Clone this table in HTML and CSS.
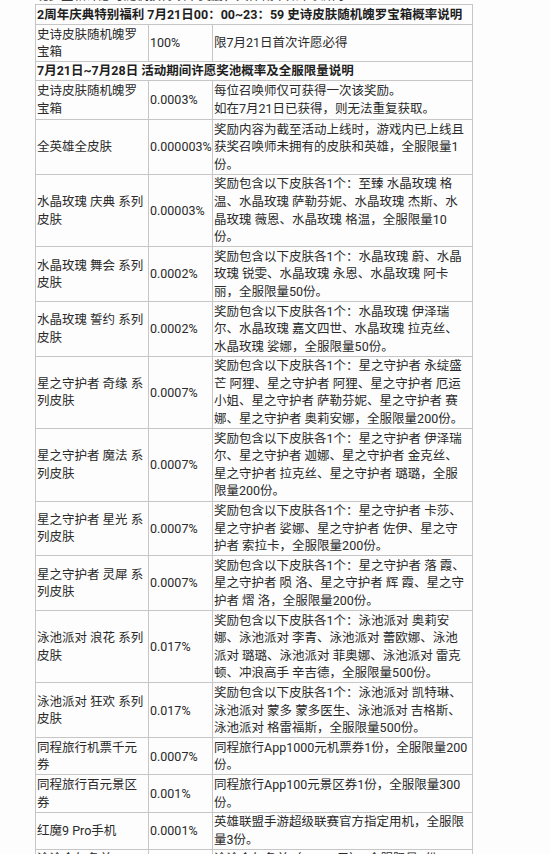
FILE: index.html
```html
<!DOCTYPE html>
<html lang="zh-CN">
<head>
<meta charset="utf-8">
<title>魄罗宝箱概率说明</title>
<link rel="stylesheet" href="styles.css">
</head>
<body>
<div class="page">
  <p class="intro">魄罗宝箱许愿可随机获得以下奖励，具体概率如下表所示：</p>
  <table class="prob">
    <colgroup>
      <col class="c1">
      <col class="c2">
      <col class="c3">
    </colgroup>
    <tbody>
      <tr class="head first"><td colspan="3">2周年庆典特别福利 7月21日00：00~23：59 史诗皮肤随机魄罗宝箱概率说明</td></tr>
      <tr><td>史诗皮肤随机魄罗宝箱</td><td>100%</td><td>限7月21日首次许愿必得</td></tr>
      <tr class="head"><td colspan="3">7月21日~7月28日 活动期间许愿奖池概率及全服限量说明</td></tr>
      <tr class="tall"><td>史诗皮肤随机魄罗宝箱</td><td>0.0003%</td><td>每位召唤师仅可获得一次该奖励。<br>如在7月21日已获得，则无法重复获取。</td></tr>
      <tr><td>全英雄全皮肤</td><td>0.000003%</td><td>奖励内容为截至活动上线时，游戏内已上线且获奖召唤师未拥有的皮肤和英雄，全服限量1份。</td></tr>
      <tr><td>水晶玫瑰 庆典 系列皮肤</td><td>0.00003%</td><td>奖励包含以下皮肤各1个：至臻 水晶玫瑰 格温、水晶玫瑰 萨勒芬妮、水晶玫瑰 杰斯、水晶玫瑰 薇恩、水晶玫瑰 格温，全服限量10份。</td></tr>
      <tr><td>水晶玫瑰 舞会 系列皮肤</td><td>0.0002%</td><td>奖励包含以下皮肤各1个：水晶玫瑰 蔚、水晶玫瑰 锐雯、水晶玫瑰 永恩、水晶玫瑰 阿卡丽，全服限量50份。</td></tr>
      <tr><td>水晶玫瑰 誓约 系列皮肤</td><td>0.0002%</td><td>奖励包含以下皮肤各1个：水晶玫瑰 伊泽瑞尔、水晶玫瑰 嘉文四世、水晶玫瑰 拉克丝、水晶玫瑰 娑娜，全服限量50份。</td></tr>
      <tr><td>星之守护者 奇缘 系列皮肤</td><td>0.0007%</td><td>奖励包含以下皮肤各1个：星之守护者 永绽盛芒 阿狸、星之守护者 阿狸、星之守护者 厄运小姐、星之守护者 萨勒芬妮、星之守护者 赛娜、星之守护者 奥莉安娜，全服限量200份。</td></tr>
      <tr><td>星之守护者 魔法 系列皮肤</td><td>0.0007%</td><td>奖励包含以下皮肤各1个：星之守护者 伊泽瑞尔、星之守护者 迦娜、星之守护者 金克丝、星之守护者 拉克丝、星之守护者 璐璐，全服限量200份。</td></tr>
      <tr><td>星之守护者 星光 系列皮肤</td><td>0.0007%</td><td>奖励包含以下皮肤各1个：星之守护者 卡莎、星之守护者 娑娜、星之守护者 佐伊、星之守护者 索拉卡，全服限量200份。</td></tr>
      <tr><td>星之守护者 灵犀 系列皮肤</td><td>0.0007%</td><td>奖励包含以下皮肤各1个：星之守护者 落 霞、星之守护者 陨 洛、星之守护者 辉 霞、星之守护者 熠 洛，全服限量200份。</td></tr>
      <tr><td>泳池派对 浪花 系列皮肤</td><td>0.017%</td><td>奖励包含以下皮肤各1个：泳池派对 奥莉安娜、泳池派对 李青、泳池派对 蕾欧娜、泳池派对 璐璐、泳池派对 菲奥娜、泳池派对 雷克顿、冲浪高手 辛吉德，全服限量500份。</td></tr>
      <tr><td>泳池派对 狂欢 系列皮肤</td><td>0.017%</td><td>奖励包含以下皮肤各1个：泳池派对 凯特琳、泳池派对 蒙多 蒙多医生、泳池派对 吉格斯、泳池派对 格雷福斯，全服限量500份。</td></tr>
      <tr><td>同程旅行机票千元券</td><td>0.0007%</td><td>同程旅行App1000元机票券1份，全服限量200份。</td></tr>
      <tr><td>同程旅行百元景区券</td><td>0.001%</td><td>同程旅行App100元景区券1份，全服限量300份。</td></tr>
      <tr><td>红魔9 Pro手机</td><td>0.0001%</td><td>英雄联盟手游超级联赛官方指定用机，全服限量3份。</td></tr>
      <tr><td>途途会年备单</td><td>0.000003%</td><td>途途会年备单（10000元），全服限量1份。</td></tr>
    </tbody>
  </table>
</div>
</body>
</html>
```

FILE: styles.css
```css
html, body {
  margin: 0;
  padding: 0;
  background: #fdfdfd;
}

body {
  font-family: Roboto, "Noto Sans CJK SC", sans-serif;
  font-size: 12.5px;
  line-height: 17.6px;
  color: #2a2a2a;
  overflow: hidden;
}

.page {
  padding: 0 0 0 35px;
}

.intro {
  margin: -12.5px 0 0 1px;
  line-height: 16px;
  color: #3a3a3a;
}

.prob {
  width: 437px;
  table-layout: fixed;
  border-collapse: collapse;
}

.c1 { width: 113px; }
.c2 { width: 64px; }
.c3 { width: 260px; }

.prob td {
  border: 1px solid #c6c6c6;
  padding: 0.5px 1px;
  vertical-align: middle;
}

.prob td:last-child {
  padding-right: 2.5px;
}

.prob .tall td {
  padding-top: 1.5px;
  padding-bottom: 1.5px;
}

.prob .head td {
  font-weight: 700;
  color: #1e1e1e;
  padding-top: 0;
  padding-bottom: 0;
}

.prob .head.first td {
  padding-top: 1px;
  padding-bottom: 1px;
}
```
